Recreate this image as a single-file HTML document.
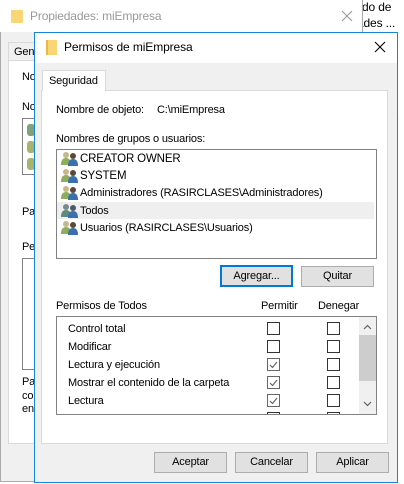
<!DOCTYPE html>
<html><head><style>
*{margin:0;padding:0;box-sizing:border-box}
body{width:404px;height:484px;position:relative;overflow:hidden;background:#fff;font-family:"Liberation Sans",sans-serif;font-size:11px;letter-spacing:-0.15px;color:#000}
.a{position:absolute;white-space:nowrap}
.cb{position:absolute;width:13px;height:13px;border:1px solid #333;background:#fff}
.cb.c{border-color:#666}
.btn{position:absolute;height:21px;background:#e1e1e1;border:1px solid #adadad;text-align:center;line-height:19px}
</style></head><body>
<div class="a" style="left:362px;top:0px;font-size:12px">do de</div>
<div class="a" style="left:357px;top:16px;font-size:12px">ades ...</div>
<div class="a" style="left:396px;top:110px;">.</div>
<div class="a" style="left:0;top:0;width:363px;height:482px;background:#f0f0f0;border:1px solid #aaa;border-top:none"></div>
<div class="a" style="left:0;top:0;width:363px;height:32px;background:#fff;border-right:1px solid #aaa"></div>
<div class="a" style="left:11px;top:10px;width:12px;height:13px;background:#f8d675;border-radius:1px"></div>
<div class="a" style="left:30px;top:9px;font-size:12px;color:#999">Propiedades: miEmpresa</div>
<svg class="a" style="left:341px;top:10px" width="12" height="12"><path d="M1 1L11 11M11 1L1 11" stroke="#999" stroke-width="1.1"/></svg>
<div class="a" style="left:8px;top:42px;width:40px;height:19px;border:1px solid #d9d9d9;background:#f0f0f0;padding:3px 0 0 5px">Gen</div>
<div class="a" style="left:8px;top:60px;width:340px;height:384px;background:#fff;border:1px solid #d9d9d9"></div>
<div class="a" style="left:22px;top:71px">No</div>
<div class="a" style="left:22px;top:101px">No</div>
<div class="a" style="left:22px;top:118px;width:20px;height:57px;border:1px solid #828282"></div>
<div class="a" style="left:27px;top:124px;width:8px;height:12px;background:#7fa27a;border-radius:3px"></div>
<div class="a" style="left:27px;top:141px;width:8px;height:12px;background:#a6b56d;border-radius:3px"></div>
<div class="a" style="left:27px;top:158px;width:8px;height:12px;background:#a6b56d;border-radius:3px"></div>
<div class="a" style="left:22px;top:206px">Pa</div>
<div class="a" style="left:22px;top:241px">Pe</div>
<div class="a" style="left:22px;top:258px;width:20px;height:112px;border:1px solid #828282"></div>
<div class="a" style="left:22px;top:376px">Pa</div>
<div class="a" style="left:22px;top:390px">co</div>
<div class="a" style="left:22px;top:403px">en</div>
<div class="a" style="left:34px;top:32px;width:364px;height:451px;background:#f0f0f0;border:1px solid #1883d7"></div>
<div class="a" style="left:35px;top:33px;width:362px;height:30px;background:#fff"></div>
<div class="a" style="left:46px;top:40px;width:11px;height:15px;background:#f8d675;border-left:2px solid #e8b84a"></div>
<div class="a" style="left:64px;top:40px;font-size:12px;letter-spacing:-0.1px">Permisos de miEmpresa</div>
<svg class="a" style="left:374px;top:41px" width="12" height="12"><path d="M1 1L11 11M11 1L1 11" stroke="#000" stroke-width="1.1"/></svg>
<div class="a" style="left:41px;top:90px;width:347px;height:354px;background:#fff;border:1px solid #d9d9d9"></div>
<div class="a" style="left:42px;top:70px;width:64px;height:21px;background:#fff;border:1px solid #d9d9d9;border-bottom:none;padding:4px 0 0 6px">Seguridad</div>
<div class="a" style="left:56px;top:104px">Nombre de objeto:</div>
<div class="a" style="left:157px;top:104px">C:\miEmpresa</div>
<div class="a" style="left:56px;top:133px">Nombres de grupos o usuarios:</div>
<div class="a" style="left:56px;top:149px;width:321px;height:110px;border:1px solid #828282;background:#fff"></div>
<div class="a" style="left:57px;top:202px;width:317px;height:17px;background:#efefef"></div>
<svg class="a" style="left:61px;top:151px" width="18" height="90" viewBox="0 0 18 90">
<g id="u"><circle cx="5" cy="4" r="3" fill="#c9b58a"/><path d="M0 14 Q0 7 5 7 Q10 7 10 14Z" fill="#8fae5b"/><circle cx="12" cy="5" r="3" fill="#5a4a3a"/><path d="M7 15 Q7 8 12 8 Q17 8 17 15Z" fill="#3a6fb0"/></g>
<use href="#u" y="17"/><use href="#u" y="34"/>
<g transform="translate(0,52)"><circle cx="5" cy="4" r="3" fill="#7a8a8a"/><path d="M0 14 Q0 7 5 7 Q10 7 10 14Z" fill="#5f8a7a"/><circle cx="12" cy="5" r="3" fill="#4a5a6a"/><path d="M7 15 Q7 8 12 8 Q17 8 17 15Z" fill="#3a6fb0"/></g>
<use href="#u" y="69"/>
</svg>
<div class="a" style="left:80px;top:153px;font-size:11.5px">CREATOR OWNER</div>
<div class="a" style="left:80px;top:170px;font-size:11.5px">SYSTEM</div>
<div class="a" style="left:80px;top:187px">Administradores (RASIRCLASES\Administradores)</div>
<div class="a" style="left:80px;top:205px">Todos</div>
<div class="a" style="left:80px;top:222px">Usuarios (RASIRCLASES\Usuarios)</div>
<div class="btn" style="left:220px;top:265px;width:73px;height:22px;border:2px solid #0078d7;line-height:18px">Agregar...</div>
<div class="btn" style="left:301px;top:266px;width:73px">Quitar</div>
<div class="a" style="left:56px;top:300px">Permisos de Todos</div>
<div class="a" style="left:261px;top:300px">Permitir</div>
<div class="a" style="left:318px;top:300px">Denegar</div>
<div class="a" style="left:56px;top:316px;width:321px;height:99px;border:1px solid #828282;background:#fff;overflow:hidden">
<div class="a" style="left:11px;top:6px">Control total</div>
<div class="a" style="left:11px;top:24px">Modificar</div>
<div class="a" style="left:11px;top:42px">Lectura y ejecución</div>
<div class="a" style="left:11px;top:60px">Mostrar el contenido de la carpeta</div>
<div class="a" style="left:11px;top:78px">Lectura</div>
<div class="cb" style="left:210px;top:5px"></div><div class="cb" style="left:270px;top:5px"></div>
<div class="cb" style="left:210px;top:23px"></div><div class="cb" style="left:270px;top:23px"></div>
<div class="cb c" style="left:210px;top:41px"></div><div class="cb" style="left:270px;top:41px"></div>
<div class="cb c" style="left:210px;top:59px"></div><div class="cb" style="left:270px;top:59px"></div>
<div class="cb c" style="left:210px;top:77px"></div><div class="cb" style="left:270px;top:77px"></div>
<div class="cb" style="left:210px;top:95px"></div><div class="cb" style="left:270px;top:95px"></div>
<svg class="a" style="left:210px;top:41px" width="13" height="50"><g fill="none" stroke="#666" stroke-width="1.2"><path d="M3 7 L5.5 9.5 L10 4"/><path d="M3 25 L5.5 27.5 L10 22"/><path d="M3 43 L5.5 45.5 L10 40"/></g></svg>
<div class="a" style="left:302px;top:0;width:17px;height:97px;background:#f0f0f0"></div>
<div class="a" style="left:302px;top:18px;width:17px;height:46px;background:#cdcdcd"></div>
<svg class="a" style="left:302px;top:0" width="17" height="97"><g fill="none" stroke="#606060" stroke-width="1.2"><path d="M5 12 L8.5 8.5 L12 12"/><path d="M5 85 L8.5 88.5 L12 85"/></g></svg>
</div>
<div class="btn" style="left:154px;top:452px;width:73px">Aceptar</div>
<div class="btn" style="left:235px;top:452px;width:73px">Cancelar</div>
<div class="btn" style="left:316px;top:452px;width:73px">Aplicar</div>
</body></html>
